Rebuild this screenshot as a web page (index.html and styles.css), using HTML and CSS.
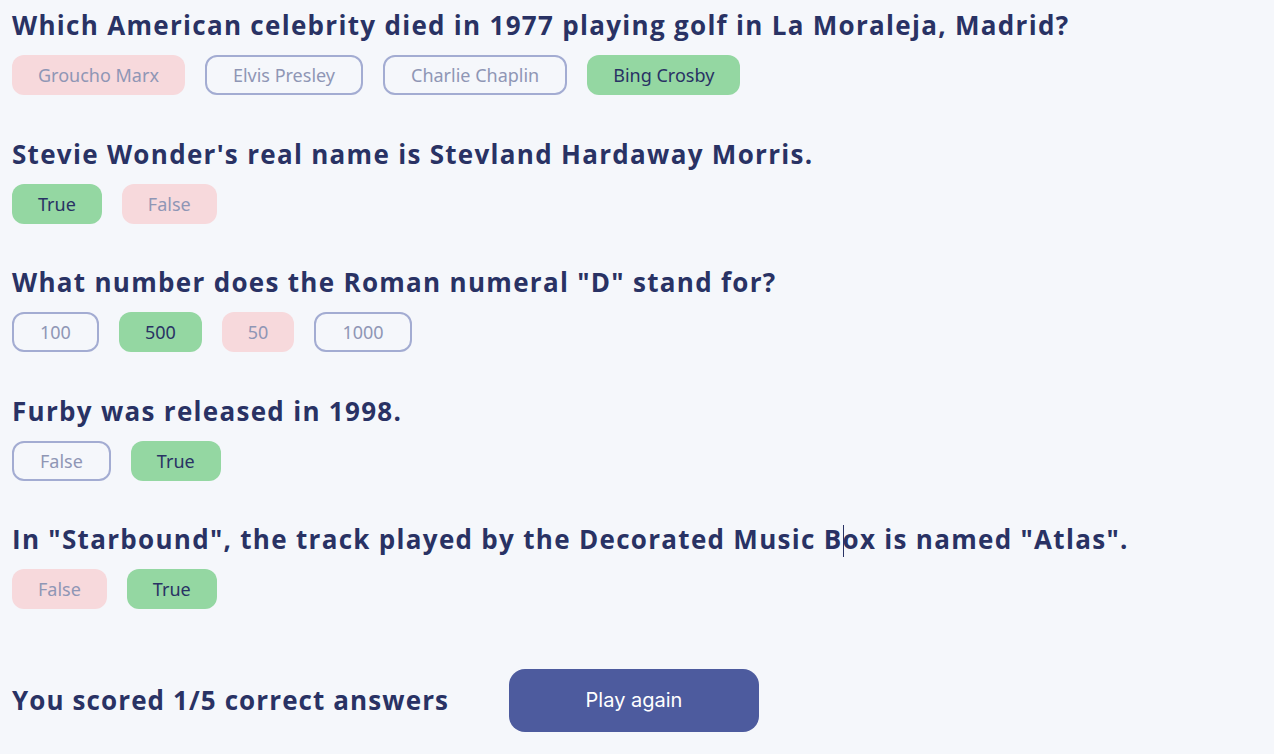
FILE: index.html
```html
<!DOCTYPE html>
<html>
<head>
<meta charset="utf-8">
<link rel="stylesheet" href="styles.css">
</head>
<body>
<main class="quiz">
  <section class="question">
    <h2 class="q-title">Which American celebrity died in 1977 playing golf in La Moraleja, Madrid?</h2>
    <div class="answers">
      <span class="ans wrong">Groucho Marx</span>
      <span class="ans idle">Elvis Presley</span>
      <span class="ans idle">Charlie Chaplin</span>
      <span class="ans right">Bing Crosby</span>
    </div>
  </section>
  <section class="question">
    <h2 class="q-title">Stevie Wonder's real name is Stevland Hardaway Morris.</h2>
    <div class="answers">
      <span class="ans right">True</span>
      <span class="ans wrong">False</span>
    </div>
  </section>
  <section class="question">
    <h2 class="q-title">What number does the Roman numeral "D" stand for?</h2>
    <div class="answers">
      <span class="ans idle">100</span>
      <span class="ans right">500</span>
      <span class="ans wrong">50</span>
      <span class="ans idle">1000</span>
    </div>
  </section>
  <section class="question">
    <h2 class="q-title">Furby was released in 1998.</h2>
    <div class="answers">
      <span class="ans idle">False</span>
      <span class="ans right">True</span>
    </div>
  </section>
  <section class="question">
    <h2 class="q-title">In "Starbound", the track played by the Decorated Music B<span class="caret"></span>ox is named "Atlas".</h2>
    <div class="answers">
      <span class="ans wrong">False</span>
      <span class="ans right">True</span>
    </div>
  </section>
  <footer class="result">
    <p class="score">You scored 1/5 correct answers</p>
    <button class="play">Play again</button>
  </footer>
</main>
</body>
</html>
```
FILE: styles.css
```css
html, body {
  margin: 0;
  padding: 0;
  background: #f5f7fb;
}
body {
  font-family: "Open Sans", sans-serif;
  color: #293264;
}
.quiz {
  padding: 6px 12px 0 12px;
  display: flex;
  flex-direction: column;
}
.question {
  display: flex;
  flex-direction: column;
  height: 128.5px;
}
.q-title {
  margin: 0;
  font-family: "Open Sans", sans-serif;
  font-weight: 700;
  font-size: 26px;
  line-height: 38px;
  letter-spacing: 1.3px;
  color: #293264;
}
.answers {
  display: flex;
  gap: 20px;
  margin-top: 11px;
}
.ans {
  box-sizing: border-box;
  height: 40px;
  padding: 0 26px;
  border-radius: 12px;
  display: flex;
  align-items: center;
  font-family: "Noto Sans", sans-serif;
  font-size: 18px;
  color: #8f96b5;
}
.ans.idle {
  border: 2px solid #a3acd2;
  padding: 0 26px;
}
.ans.wrong {
  background: #f7d9dc;
}
.ans.right {
  background: #94d7a2;
  color: #293264;
}
.caret {
  position: relative;
  display: inline-block;
  width: 0;
}
.caret::after {
  content: "";
  position: absolute;
  left: 0;
  top: -24px;
  width: 1px;
  height: 32px;
  background: #293264;
}
.result {
  display: flex;
  align-items: center;
  margin-top: 20px;
}
.score {
  margin: 0;
  font-family: "Open Sans", sans-serif;
  font-weight: 700;
  font-size: 26px;
  letter-spacing: 1.1px;
  color: #293264;
  width: 497px;
}
.play {
  width: 250px;
  height: 63px;
  border: none;
  border-radius: 16px;
  background: #4d5b9e;
  color: #ffffff;
  font-family: "Inter", sans-serif;
  font-size: 20px;
}
```
